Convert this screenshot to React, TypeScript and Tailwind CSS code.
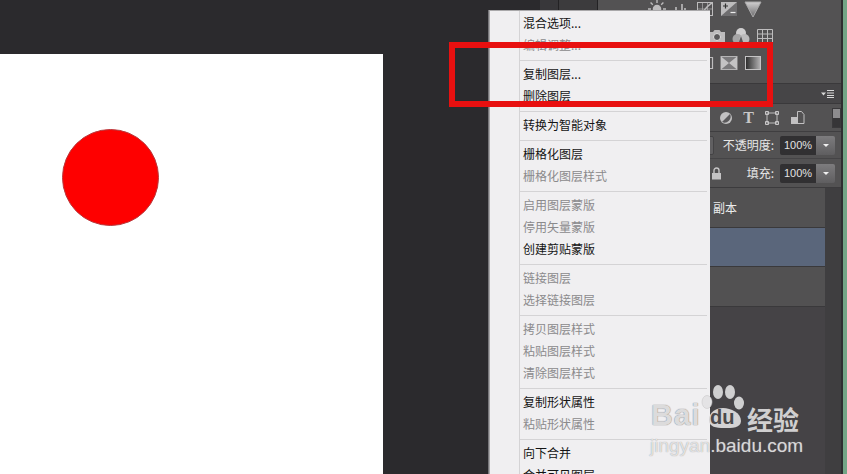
import React from 'react'

type MenuEntry = { label: string; disabled?: boolean } | 'sep'

const menuItems: MenuEntry[] = [
  { label: '混合选项...' },
  { label: '编辑调整...', disabled: true },
  'sep',
  { label: '复制图层...' },
  { label: '删除图层' },
  'sep',
  { label: '转换为智能对象' },
  'sep',
  { label: '栅格化图层' },
  { label: '栅格化图层样式', disabled: true },
  'sep',
  { label: '启用图层蒙版', disabled: true },
  { label: '停用矢量蒙版', disabled: true },
  { label: '创建剪贴蒙版' },
  'sep',
  { label: '链接图层', disabled: true },
  { label: '选择链接图层', disabled: true },
  'sep',
  { label: '拷贝图层样式', disabled: true },
  { label: '粘贴图层样式', disabled: true },
  { label: '清除图层样式', disabled: true },
  'sep',
  { label: '复制形状属性' },
  { label: '粘贴形状属性', disabled: true },
  'sep',
  { label: '向下合并' },
  { label: '合并可见图层' },
]

function ContextMenu() {
  return (
    <div className="absolute left-[489px] top-[10px] w-[221px] h-[480px] bg-[#f0eff1] border-l border-t border-[#a9a8aa] pt-[1px] shadow-[-1px_0_0_#77767a]">
      {/* gutter line */}
      <div className="absolute left-[29px] top-0 bottom-0 w-px bg-[#d4d3d5]" />
      {menuItems.map((item, idx) =>
        item === 'sep' ? (
          <div key={idx} className="h-[7px] flex items-center pt-[2px] pl-[30px] pr-[3px]">
            <div className="h-px w-full bg-[#d4d3d5]" />
          </div>
        ) : (
          <div
            key={idx}
            className={`h-[22px] pl-[33px] flex items-center text-[12px] leading-none ${
              item.disabled ? 'text-[#8b8a8c]' : 'text-[#141414]'
            }`}
          >
            {item.label}
          </div>
        )
      )}
    </div>
  )
}

function AdjustIcon({ kind }: { kind: string }) {
  const c = '#bdbcbd'
  return (
    <svg width="18" height="18" viewBox="0 0 18 18" fill="none" className="shrink-0">
      {kind === 'sun' && (
        <g stroke={c} strokeWidth="1.4">
          <circle cx="9" cy="9" r="3.6" fill={c} />
          <path d="M9 0v3M9 15v3M0 9h3M15 9h3M2.6 2.6l2.2 2.2M13.2 13.2l2.2 2.2M15.4 2.6l-2.2 2.2M4.8 13.2l-2.2 2.2" />
        </g>
      )}
      {kind === 'hist' && (
        <path d="M1 16V11M4 16V7M7 16V10M10 16V4M13 16V8M16 16V11" stroke={c} strokeWidth="1.6" />
      )}
      {kind === 'curves' && (
        <g stroke={c} strokeWidth="1">
          <rect x="1.5" y="2.5" width="15" height="13" />
          <path d="M6.5 2.5v13M11.5 2.5v13M1.5 9h15" strokeOpacity="0.6" />
          <path d="M2 15C7 14 10 6 16 3" strokeWidth="1.4" />
        </g>
      )}
      {kind === 'exposure' && (
        <g>
          <rect x="1" y="2" width="16" height="14" fill={c} />
          <path d="M1 16L17 2V16Z" fill="#6f6e70" />
          <path d="M3 6h5M5.5 3.5v5" stroke="#333" strokeWidth="1.2" />
          <path d="M10.500 12.500h5" stroke="#eee" strokeWidth="1.2" />
        </g>
      )}
      {kind === 'triangle' && (
        <g>
          <defs>
            <linearGradient id="tri" x1="0" y1="0" x2="0" y2="1">
              <stop offset="0" stopColor="#d0cfd0" />
              <stop offset="1" stopColor="#6a696b" />
            </linearGradient>
          </defs>
          <path d="M1 2H17L9 17Z" fill="url(#tri)" stroke="#a9a8a9" />
        </g>
      )}
      {kind === 'camera' && (
        <g>
          <path d="M1 5h4l1.500-2h5L13 5h4v11H1Z" fill={c} />
          <circle cx="9" cy="10" r="3.500" fill="#5a595b" stroke="#e0e0e0" />
        </g>
      )}
      {kind === 'circles' && (
        <g>
          <circle cx="9" cy="6" r="5" fill="#cfcecf" />
          <circle cx="5.500" cy="12" r="5" fill="#a5a4a5" />
          <circle cx="12.500" cy="12" r="5" fill="#bcbbbc" />
          <path d="M9 9l-2 6h4Z" fill="#5a595b" />
        </g>
      )}
      {kind === 'grid' && (
        <path d="M1.500 2.500h15v13h-15ZM6.500 2.500v13M11.500 2.500v13M1.500 7h15M1.500 11.500h15" stroke={c} strokeWidth="1" />
      )}
      {kind === 'bars' && (
        <path d="M1.500 3.500h15v11h-15ZM6.500 3.500v11M11.500 3.500v11" stroke={c} strokeWidth="1.200" />
      )}
      {kind === 'xmap' && (
        <g>
          <rect x="1" y="2.500" width="16" height="13" fill="#7b7a7c" stroke="#b5b4b5" />
          <path d="M1 2.500L9 9 1 15.500ZM17 2.500L9 9l8 6.500Z" fill="#c4c3c4" />
        </g>
      )}
      {kind === 'gradient' && (
        <g>
          <defs>
            <linearGradient id="grad" x1="0" y1="0" x2="1" y2="0">
              <stop offset="0" stopColor="#2a2a2a" />
              <stop offset="1" stopColor="#b5b4b5" />
            </linearGradient>
          </defs>
          <rect x="1.500" y="2.500" width="15" height="13" fill="url(#grad)" stroke="#c4c3c4" />
        </g>
      )}
    </svg>
  )
}

function AdjustRow({ icons, className }: { icons: string[]; className: string }) {
  return (
    <div className={`h-[18px] flex gap-[6px] ${className}`}>
      {icons.map((name) => (
        <AdjustIcon key={name} kind={name} />
      ))}
    </div>
  )
}

function BlendField({ label }: { label: string }) {
  return (
    <>
      <span className="text-[12px] leading-none text-[#e6e6e6] whitespace-nowrap">{label}</span>
      <div className="ml-[6px] w-[55px] h-[19px] flex rounded-[2px] overflow-hidden">
        <div className="w-[36px] bg-[#313032] text-[11px] text-[#e2e2e2] flex items-center pl-[4px] font-['Liberation_Sans',sans-serif]">
          100%
        </div>
        <div className="flex-1 bg-gradient-to-b from-[#7d7c7e] to-[#5f5e60] flex items-center justify-center">
          <div className="w-0 h-0 border-x-[3px] border-x-transparent border-t-[3px] border-t-[#f0f0f0]" />
        </div>
      </div>
    </>
  )
}

function LayersPanel() {
  return (
    <div className="flex-1 min-w-0 flex flex-col min-h-0">
      <div className="h-[84px] shrink-0 flex flex-col gap-[9px] border-b border-[#3a393b]">
        <AdjustRow icons={['sun', 'hist', 'curves', 'exposure', 'triangle']} className="pl-[50px]" />
        <AdjustRow icons={['camera', 'circles', 'grid']} className="pl-[110px]" />
        <AdjustRow icons={['bars', 'xmap', 'gradient']} className="pl-[98px]" />
      </div>

      {/* tab strip */}
      <div className="h-[20px] shrink-0 bg-[#464547] flex items-center justify-end pr-[7px] border-b border-[#3a393b]">
        <svg width="13" height="8" viewBox="0 0 13 8">
          <path d="M0 2.500h5L2.500 5.500Z" fill="#d8d8d8" />
          <path d="M6 .5h7M6 3h7M6 5.500h7M6 7.500h7" stroke="#d8d8d8" strokeWidth="1" />
        </svg>
      </div>

      {/* filter row */}
      <div className="h-[28px] shrink-0 flex items-center pl-[121px] gap-[9px] border-b border-[#3f3e40] relative">
        <svg width="14" height="14" viewBox="0 0 14 14" className="shrink-0">
          <circle cx="7" cy="7" r="6" fill="#c2c1c2" />
          <path d="M11 3L3 11A6 6 0 0 0 11 3Z" fill="#5a595b" />
        </svg>
        <span className="w-[15px] text-center text-[16px] leading-none font-bold text-[#c8c7c8] font-['Liberation_Serif',serif]">T</span>
        <svg width="16" height="16" viewBox="0 0 16 16" fill="none" className="shrink-0">
          <rect x="3" y="3" width="10" height="10" stroke="#bdbcbd" />
          <path d="M1.500 1.500h3v3h-3ZM11.500 1.500h3v3h-3ZM1.500 11.500h3v3h-3ZM11.500 11.500h3v3h-3Z" stroke="#c8c7c8" />
        </svg>
        <svg width="15" height="16" viewBox="0 0 15 16" fill="none" className="ml-[1px] shrink-0">
          <path d="M7.500 1.500h4l2.500 3v9h-6.500Z" stroke="#c2c1c2" />
          <rect x="1" y="7" width="7" height="7" fill="#c2c1c2" />
        </svg>
        <div className="ml-[18px] w-[9px] h-[20px] shrink-0 flex flex-col border border-[#3a393b]">
          <div className="flex-1 bg-[#8d8c8e]" />
          <div className="flex-1 bg-[#363537]" />
        </div>
      </div>

      {/* opacity */}
      <div className="h-[27px] shrink-0 flex items-center justify-end pr-[6px] relative border-b border-[#454446]">
        {/* blend mode select, mostly under the menu */}
        <div className="mr-auto w-[116px] h-[19px] bg-[#605f61] rounded-r-[2px] border border-[#444345]" />
        <BlendField label="不透明度:" />
      </div>

      {/* fill */}
      <div className="h-[28px] shrink-0 flex items-center justify-end pr-[6px] relative">
        <svg width="11" height="13" viewBox="0 0 11 13" className="mr-[25px] shrink-0">
          <path d="M3 6V3.500a2.500 2.500 0 0 1 5 0V6" fill="none" stroke="#c5c4c5" strokeWidth="1.400" />
          <rect x="1" y="6" width="9" height="6.500" fill="#c5c4c5" />
        </svg>
        <BlendField label="填充:" />
      </div>

      {/* layer list */}
      <div className="flex-1 flex min-h-0 border-t border-[#3c3b3d]">
        <div className="w-[227px] shrink-0 flex flex-col bg-[#454346]">
          <div className="h-[40px] bg-[#525152] pl-[115px] flex items-center text-[12px] text-[#ececec] border-b border-[#3a393b]">
            副本
          </div>
          <div className="h-[39px] bg-[#5a667b] border-b border-[#3a393b]" />
          <div className="h-[40px] bg-[#525152] border-b border-[#3a393b]" />
        </div>
        <div className="flex-1 bg-[#3f3e40]" />
      </div>
    </div>
  )
}

function Watermark() {
  return (
    <div className="absolute left-[650px] top-[384px] w-[155px] h-[72px] text-white">
      <span className="absolute left-[1px] top-[16px] text-[30px] leading-none font-bold tracking-[1px] text-white/70 [text-shadow:0_0_1px_#8f8e90,0_0_1px_#8f8e90] font-['Liberation_Sans',sans-serif]">
        Bai
      </span>
      <svg width="46" height="48" viewBox="0 0 46 48" className="absolute left-[51px] top-0">
        <ellipse cx="6" cy="18" rx="5" ry="6.500" fill="#e4e3e5" stroke="#c9c8ca" strokeWidth="0.600" />
        <ellipse cx="17" cy="8" rx="5" ry="7" fill="#cfcfd0" />
        <ellipse cx="29" cy="8" rx="5" ry="7" fill="#cfcfd0" />
        <ellipse cx="38" cy="19" rx="5" ry="6.500" fill="#cfcfd0" />
        <path d="M8 36C8 28 15 24 22 24C30 24 40 29 40 37C40 44 31 44 23 44C15 44 8 43 8 36Z" fill="#d4d3d4" />
      </svg>
      <span className="absolute left-[60px] top-[23px] text-[20px] leading-none font-bold text-[#4a494b] font-['Liberation_Sans',sans-serif]">
        du
      </span>
      <span className="absolute left-[97px] top-[22px] text-[26px] leading-none font-bold text-[#d0cfd0] whitespace-nowrap">
        经验
      </span>
      <span className="absolute left-0 top-[52px] text-[19px] leading-none text-white/70 [text-shadow:0_0_1px_#8f8e90] whitespace-nowrap font-['Liberation_Sans',sans-serif]">
        jingyan.baidu.com
      </span>
    </div>
  )
}

export default function App() {
  return (
    <div className="relative w-[847px] h-[474px] overflow-hidden flex bg-[#2b2a2d] font-['Noto_Sans_CJK_SC','Noto_Sans',sans-serif]">
      {/* document area */}
      <div className="w-[540px] shrink-0 pt-[54px]">
        <div className="w-[383px] h-full bg-white pl-[62px] pt-[75px]">
          <div className="w-[97px] h-[97px] rounded-full bg-[#fe0000] border border-[#b8383c]" />
        </div>
      </div>

      {/* collapsed strip */}
      <div className="w-[18px] shrink-0 bg-[#38373a]" />
      <div className="w-[40px] shrink-0 bg-[#3c3b3d] border-x border-[#232224]" />

      {/* right dock */}
      <div className="w-[249px] shrink-0 flex bg-[#535253]">
        <LayersPanel />
        <div className="w-[2px] shrink-0 bg-[#2f2e30]" />
        <div className="w-[4px] shrink-0 bg-[#73a586]" />
      </div>

      <ContextMenu />

      {/* highlight box */}
      <div className="absolute left-[449px] top-[42px] w-[324px] h-[65px] border-[6px] border-[#e81010]" />

      <Watermark />
    </div>
  )
}
